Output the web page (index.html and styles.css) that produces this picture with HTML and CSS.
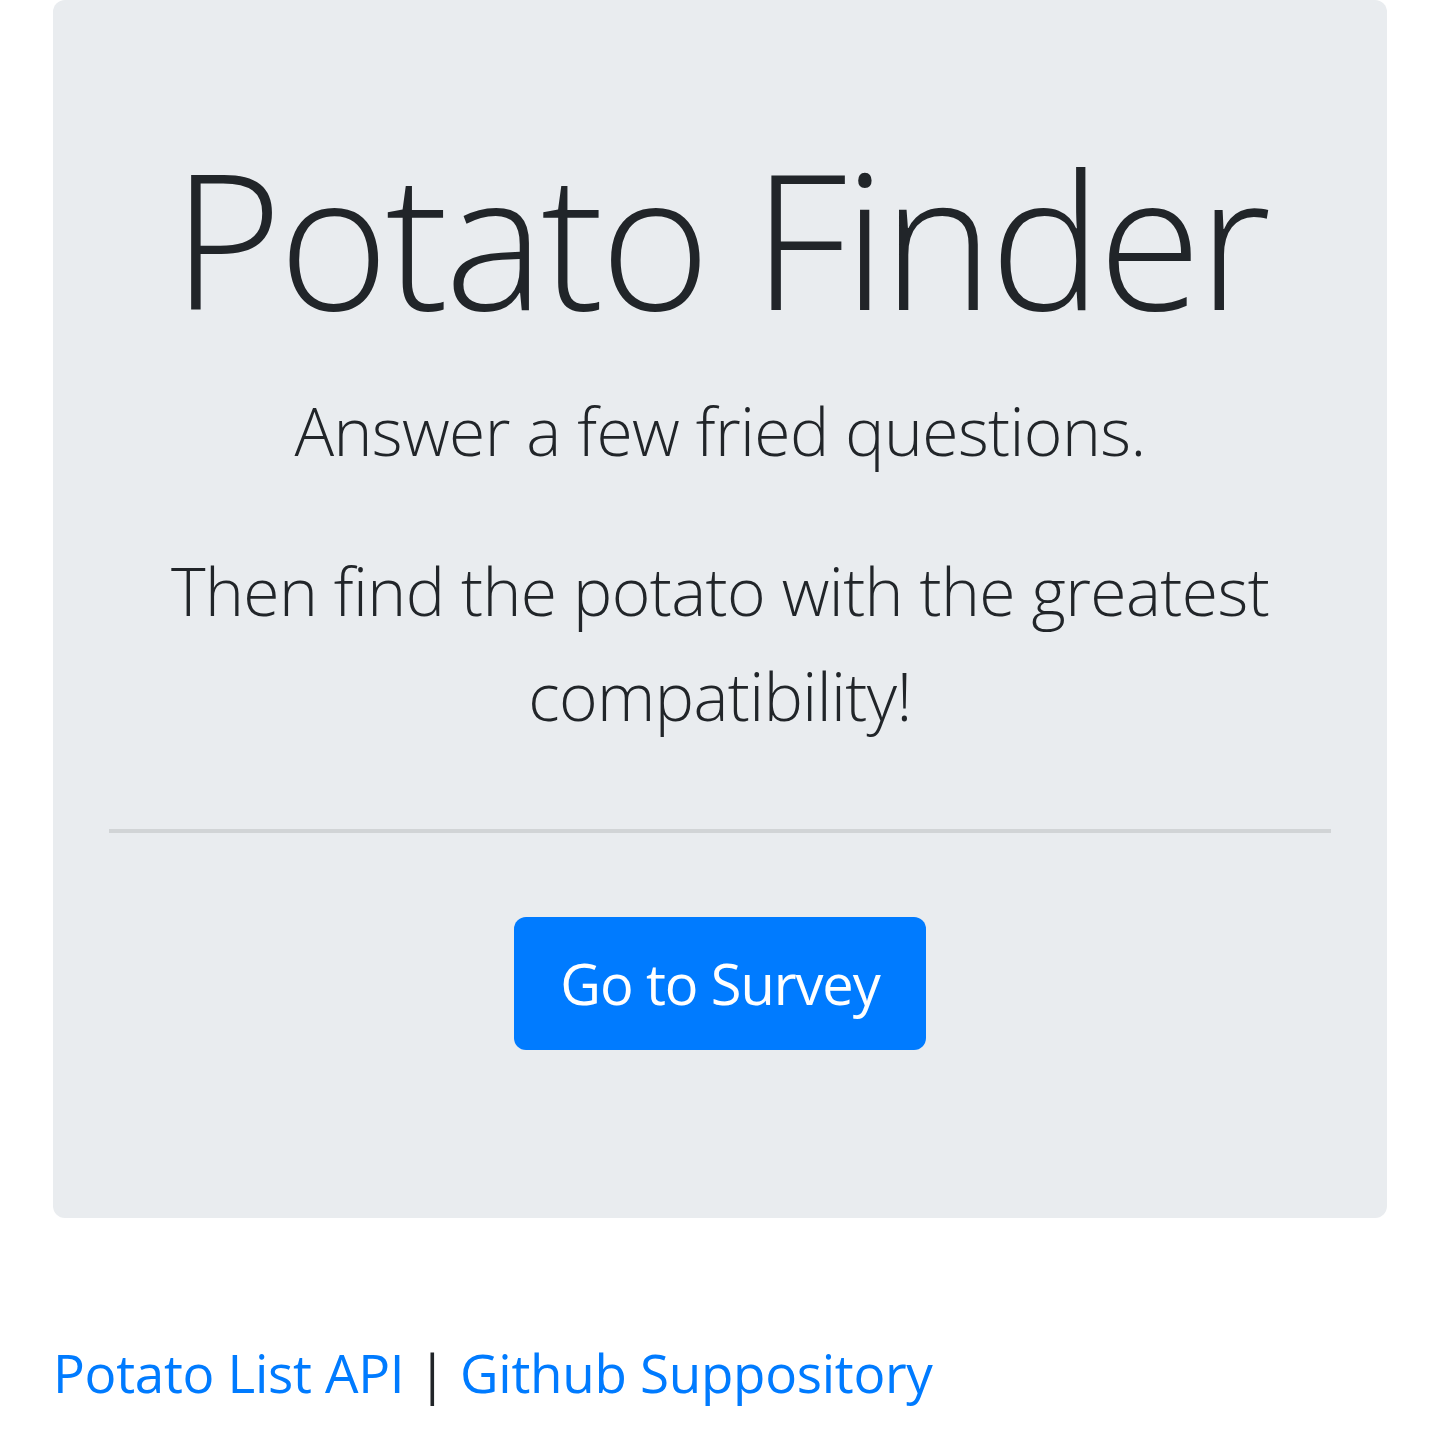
FILE: index.html
```html
<!DOCTYPE html>
<html lang="en">
<head>
<meta charset="utf-8">
<title>Potato Finder</title>
<link rel="stylesheet" href="styles.css">
</head>
<body>
<div class="container">
  <div class="jumbotron">
    <h1 class="display">Potato Finder</h1>
    <p class="lead first">Answer a few fried questions.</p>
    <p class="lead second">Then find the potato with the greatest compatibility!</p>
    <hr class="divider">
    <a class="btn" href="#">Go to Survey</a>
  </div>
  <footer class="footer">
    <a href="#" class="link">Potato List API</a> | <a href="#" class="link">Github Suppository</a>
  </footer>
</div>
</body>
</html>
```
FILE: styles.css
```css
html, body {
  margin: 0;
  padding: 0;
  background: #ffffff;
}
body {
  font-family: "Open Sans", "Noto Sans", sans-serif;
  color: #212529;
}
.container {
  width: 1334px;
  margin-left: 53px;
}
.jumbotron {
  background: #e9ecef;
  border-radius: 12px;
  padding: 124px 56px 168px;
  text-align: center;
}
.display {
  margin: 0;
  font-size: 188px;
  font-weight: 300;
  line-height: 226px;
  letter-spacing: -3.5px;
}
.lead {
  font-size: 66px;
  font-weight: 300;
  line-height: 105px;
  letter-spacing: -0.6px;
  margin: 0;
}
.lead.first {
  margin-top: 28px;
}
.lead.second {
  margin-top: 55px;
}
.divider {
  margin: 81px 0 84px;
  border: 0;
  border-top: 4px solid rgba(0, 0, 0, 0.1);
  height: 0;
}
.btn {
  display: inline-block;
  background: #007bff;
  color: #ffffff;
  text-decoration: none;
  font-size: 56px;
  font-weight: 400;
  letter-spacing: -1.1px;
  line-height: 90px;
  padding: 21px 46px 22px;
  border-radius: 12px;
}
.footer {
  margin-top: 113px;
  font-size: 53px;
  line-height: 84px;
  letter-spacing: -0.3px;
}
.link {
  color: #007bff;
  text-decoration: none;
}
```
